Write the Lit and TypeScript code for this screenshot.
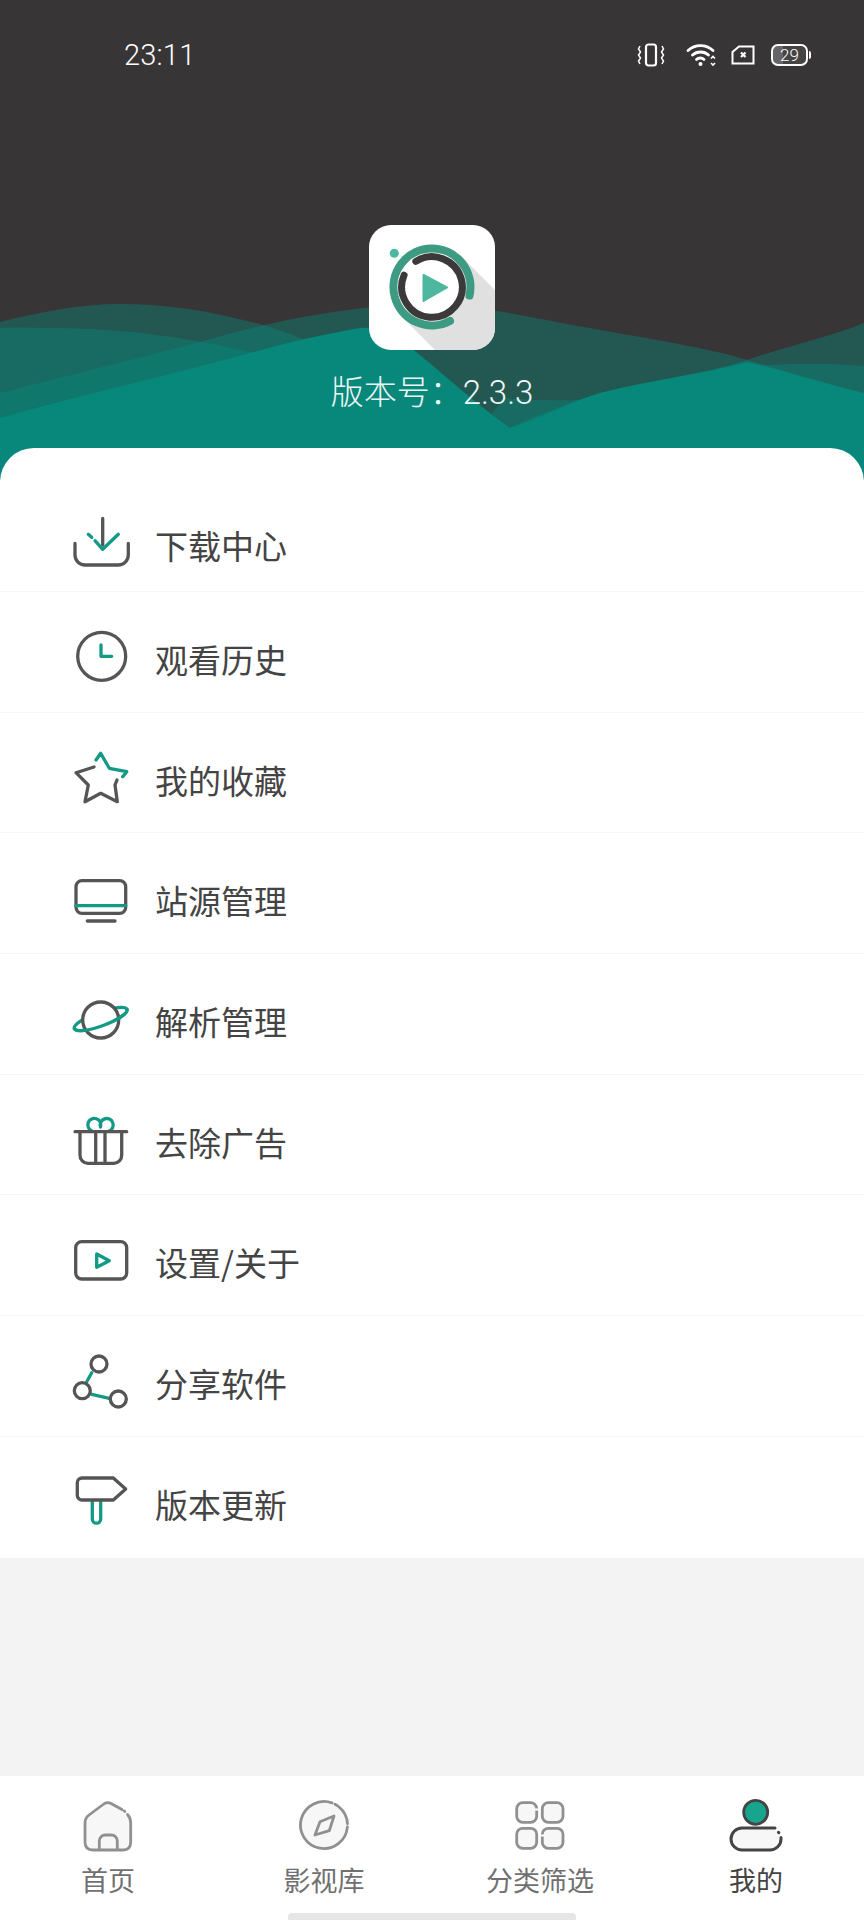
import { LitElement, html, css } from "lit";
import { customElement } from "lit/decorators.js";

const ic = (body: unknown) => html`<svg class="ic" viewBox="0 0 64 64" width="64" height="64">${body}</svg>`;

const rows = [
  { label: "下载中心", icon: html`<svg class="ic" viewBox="0 0 64 64"><path class="d" d="M6 30.5V42a10 10 0 0 0 10 10H49.3a10 10 0 0 0 10-10V30.5M33.7 5.3V32"/><path class="t" d="M19.3 21.3l3.4 3M26 27.7l7.7 8.6 15.6-15"/></svg>` },
  { label: "观看历史", icon: html`<svg class="ic" viewBox="0 0 64 64"><circle class="d" cx="32.7" cy="29.3" r="24"/><path class="t" d="M32 18V29.3H42.7"/></svg>` },
  { label: "我的收藏", icon: html`<svg class="ic" viewBox="0 0 64 64"><path class="t" d="M27 12l4.7-6.7 8.6 15 17.4 3.4-4 5"/><path class="d" d="M48 32l-2 5 2.3 16.7-16.6-8.4L16 53.7 19.3 37 7 24.7 25 19"/></svg>` },
  { label: "站源管理", icon: html`<svg class="ic" viewBox="0 0 64 64"><rect class="d" x="7" y="12.7" width="49.7" height="32.6" rx="6"/><path class="t" d="M7 37.7H56.7"/><path class="d" d="M18.3 53H46"/></svg>` },
  { label: "解析管理", icon: html`<svg class="ic" viewBox="0 0 64 64"><ellipse class="t" cx="31.7" cy="30" rx="28" ry="7" transform="rotate(-20 31.7 30)"/><circle class="d w" cx="31.7" cy="31" r="18"/><path class="t" d="M5.4 39.6A28 7 -20 0 0 58 20.4"/></svg>` },
  { label: "去除广告", icon: html`<svg class="ic" viewBox="0 0 64 64"><path class="t" d="M23 21a6.5 6.5 0 1 1 8.5-4 6.5 6.5 0 1 1 8.7 4"/><path class="d" d="M6 21.7H57.7M11 21.7V45a8 8 0 0 0 8 8.3H44.7a8 8 0 0 0 8-8.3V21.7M26.7 21.7V53M36 21.7V53"/></svg>` },
  { label: "设置/关于", icon: html`<svg class="ic" viewBox="0 0 64 64"><rect class="d" x="6.7" y="11.7" width="51" height="37.3" rx="6"/><path class="t" d="M27.7 24L40.3 30.7 27.7 37.3Z"/></svg>` },
  { label: "分享软件", icon: html`<svg class="ic" viewBox="0 0 64 64"><path class="t" d="M22.7 21.7l-5 9M22.7 43.3l17.6 4"/><circle class="d" cx="30" cy="13" r="8"/><circle class="d" cx="13.3" cy="39.7" r="8"/><circle class="d" cx="49.3" cy="48" r="8"/></svg>` },
  { label: "版本更新", icon: html`<svg class="ic" viewBox="0 0 64 64"><path class="t" d="M23.3 29V47a4.2 4.2 0 0 0 8.4 0V29"/><path class="d" d="M13 6H44.3L56.7 17 44.3 28H13a4.7 4.7 0 0 1-4.7-4.7V10.7A4.7 4.7 0 0 1 13 6Z"/></svg>` },
];

const tabs = [
  { label: "首页", active: false, icon: html`<svg class="nv" viewBox="0 0 56 56"><path class="f" d="M5 25Q5 20 9 17L24.500 5.500Q27.700 3.800 31 5.500L47 16.500Q50.700 20 50.700 25V44Q50.700 52 43 52H13Q5 52 5 44Z"/><path class="g" d="M42 11.500L31 5.500Q27.700 3.800 24.500 5.500L9 17Q5 20 5 25V44Q5 52 13 52H43Q50.700 52 50.700 44V25Q50.700 20 47.500 16.500M44.200 13l.6.5M19.300 52V43a6 6 0 0 1 6-6h6a6 6 0 0 1 6 6V52"/></svg>` },
  { label: "影视库", active: false, icon: html`<svg class="nv" viewBox="0 0 56 56"><circle class="f" cx="28" cy="27" r="23.500"/><path class="g" d="M51.400 29A23.500 23.500 0 1 1 36 4.900M39 6.300L41.500 7.700M43.100 9A23.500 23.500 0 0 1 51.500 25.800"/><path class="g" d="M38 18L33.300 32.700 19 37 24 23.700Z"/></svg>` },
  { label: "分类筛选", active: false, icon: html`<svg class="nv" viewBox="0 0 56 56"><rect class="f g" x="4.700" y="4.700" width="20" height="19.600" rx="6"/><rect class="f g" x="30.300" y="4.700" width="20.700" height="19.600" rx="6"/><rect class="f g" x="4.700" y="30.300" width="20" height="20" rx="6"/><rect class="f g" x="30.300" y="30.300" width="20.700" height="20" rx="6"/><path class="cut" d="M24.700 10.500V12.500M30.300 36.500V38.500"/></svg>` },
  { label: "我的", active: true, icon: html`<svg class="nv" viewBox="0 0 56 56"><circle class="me" cx="27.700" cy="14.300" r="12"/><rect class="f" x="2.700" y="29.700" width="50.600" height="22.300" rx="11"/><path class="h" d="M47 30H14a11 11 0 0 0 0 22H42a11 11 0 0 0 11-11V39.500M50.500 34.300l.3.3"/></svg>` },
];

@customElement("app-root")
export class AppRoot extends LitElement {
  static styles = css`
    :host {
      display: flex;
      flex-direction: column;
      width: 864px;
      height: 1920px;
      background: #f3f3f3;
      font-family: "Noto Sans CJK SC", Roboto, sans-serif;
      position: relative;
      overflow: hidden;
    }
    .hero {
      position: relative;
      height: 480px;
      flex: none;
      background: #383536;
      display: flex;
      flex-direction: column;
      align-items: center;
      color: #fff;
    }
    .waves { position: absolute; inset: 0; width: 864px; height: 480px; }
    .status {
      position: relative;
      align-self: stretch;
      height: 110px;
      padding: 0 56px 0 124px;
      display: flex;
      align-items: center;
      justify-content: space-between;
      font-family: Roboto, sans-serif;
    }
    .time { font-size: 29px; font-weight: 300; letter-spacing: 0.2px; }
    .sicons { display: flex; align-items: center; }
    .sicons svg { display: block; fill: none; stroke: #fff; }
    .vib { margin-right: 21px; }
    .wifi { margin-right: 15px; }
    .batx { margin-right: 16px; }
    .batt {
      box-sizing: border-box;
      width: 37px;
      height: 22px;
      border: 2px solid #fff;
      border-radius: 7px;
      background: linear-gradient(90deg, #666 0 30%, #444 30% 100%);
      font-size: 17px;
      font-weight: 300;
      line-height: 18px;
      text-align: center;
      position: relative;
    }
    .batt::after {
      content: "";
      position: absolute;
      right: -5px;
      top: 5px;
      width: 2px;
      height: 8px;
      background: #fff;
      border-radius: 0 2px 2px 0;
    }
    .logo {
      position: relative;
      display: block;
      width: 126px;
      height: 125px;
      margin-top: 115px;
    }
    .version {
      position: relative;
      margin-top: 23px;
      font-size: 33px;
      line-height: 40px;
      font-weight: 300;
      color: #eef7f5;
      font-family: Roboto, "Noto Sans CJK SC", sans-serif;
    }
    .card {
      position: relative;
      flex: none;
      margin-top: -32px;
      padding-top: 36px;
      background: #fff;
      border-radius: 34px 34px 0 0;
    }
    .row {
      box-sizing: border-box;
      height: 120.7px;
      padding: 14px 0 0 69px;
      display: flex;
      align-items: center;
      gap: 22px;
      border-bottom: 1px solid #f6f6f6;
      font-size: 33px;
      color: #444;
    }
    .row:first-child { height: 108px; }
    .row:last-child { border-bottom: none; }
    .ic { width: 64px; height: 64px; flex: none; display: block; }
    .d, .t { fill: none; stroke-width: 3.300; stroke-linecap: round; stroke-linejoin: round; }
    .d { stroke: #555; }
    .t { stroke: #129a85; }
    .w { fill: #fff; }
    .spacer { flex: 1; }
    .nav {
      flex: none;
      height: 144px;
      background: #fff;
      display: grid;
      grid-template-columns: repeat(4, 1fr);
    }
    .tab {
      display: flex;
      flex-direction: column;
      align-items: center;
      padding-top: 22px;
      font-size: 27px;
      line-height: 40px;
      color: #707070;
    }
    .tab.on { color: #444; }
    .nv { display: block; width: 56px; height: 56px; margin-bottom: 6px; }
    .f { fill: #f7f7f7; }
    .g { fill: none; stroke: #909090; stroke-width: 2.800; stroke-linecap: round; stroke-linejoin: round; }
    .f.g { fill: #f7f7f7; }
    .h { fill: none; stroke: #444; stroke-width: 3; stroke-linecap: round; }
    .me { fill: #17a58d; stroke: #444; stroke-width: 2.800; }
    .cut { fill: none; stroke: #fff; stroke-width: 4; }
    .indicator {
      position: absolute;
      left: 288px;
      bottom: 0;
      width: 288px;
      height: 7px;
      background: #e6e6e6;
      border-radius: 4px 4px 0 0;
    }
  `;

  render() {
    return html`
      <section class="hero">
        <svg class="waves" viewBox="0 0 864 480">
          <g fill="#07887a" fill-opacity="0.42">
            <path d="M0 322C40 312 80 304 120 304C170 304 215 312 263 325C330 345 400 385 460 410L551 447V480H0Z"/>
            <path d="M0 393C70 375 140 358 200 342C260 325 320 310 400 305C440 303 470 306 504 312C620 335 700 345 747 360C790 372 830 385 864 393V480H0Z"/>
            <path d="M0 328C20 327 40 328 60 328C130 329 190 338 250 352C320 368 370 385 430 410L520 450V480H0Z"/>
            <path d="M864 323C820 340 780 348 747 360C700 375 650 380 600 393C570 402 530 418 504 430L440 480H864Z"/>
            <path d="M864 366C820 362 780 364 747 366C700 372 650 385 600 398C570 402 530 400 504 398L440 480H864Z"/>
          </g>
          <path fill="#07887a" d="M0 418C80 395 170 375 250 353C290 342 320 335 360 328C400 325 430 370 510 428C540 418 570 402 600 393C650 380 700 375 747 362C790 372 830 385 864 393V480H0Z"/>
        </svg>
        <div class="status">
          <span class="time">23:11</span>
          <div class="sicons">
            <svg class="vib" width="28" height="24" viewBox="0 0 28 24"><rect x="9" y="1.500" width="10" height="21" rx="2.500" stroke-width="2.200"/><path stroke-width="1.500" d="M3 3l-1.500 3 2 3-2 3 2 3-2 3 1.500 3M25 3l1.500 3-2 3 2 3-2 3 2 3-1.500 3"/></svg>
            <svg class="wifi" width="30" height="24" viewBox="0 0 30 24"><path stroke-width="2.800" stroke-linecap="round" d="M2 7.500C9 1 20 1 27 7.500M6.500 12C11 8 18 8 22.500 12M10.500 16.500C12.500 14.500 16 14.500 18 16.500"/><circle cx="14.500" cy="21" r="2" fill="#fff" stroke="none"/><path stroke-width="1.600" d="M25 15.500l2-2 2 2M25 20l2 2 2-2"/></svg>
            <svg class="batx" width="24" height="20" viewBox="0 0 24 20"><path stroke-width="2" d="M8 1.500H22.500V18.500H1.500V7Z"/><path stroke-width="2.200" d="M10 7.500l4.500 4.500M14.500 7.500L10 12"/></svg>
            <div class="batt">29</div>
          </div>
        </div>
        <svg class="logo" viewBox="0 0 126 125">
          <defs><clipPath id="lc"><rect width="126" height="125" rx="22"/></clipPath></defs>
          <rect width="126" height="125" rx="22" fill="#fff"/>
          <path clip-path="url(#lc)" fill="#e0e0e0" d="M93 32L126 65V125H66L33 92Z"/>
          <circle cx="63" cy="62" r="30" fill="#fff"/>
          <path fill="none" stroke="#3d9a83" stroke-width="8" stroke-linecap="round" d="M81 96A38.500 38.500 0 1 1 100.500 70.500"/>
          <path fill="none" stroke="#3c393a" stroke-width="7" stroke-linecap="round" d="M46.800 36.400A30.300 30.300 0 1 1 35.100 50.200"/>
          <circle cx="25.300" cy="28.300" r="4.500" fill="#4db89f"/>
          <path fill="#4db89f" stroke="#4db89f" stroke-width="2" stroke-linejoin="round" d="M54.500 50L78 62.500 54.500 76Z"/>
        </svg>
        <div class="version">版本号：2.3.3</div>
      </section>
      <section class="card">
        ${rows.map((r) => html`<div class="row">${r.icon}<span>${r.label}</span></div>`)}
      </section>
      <div class="spacer"></div>
      <nav class="nav">
        ${tabs.map((t) => html`<div class="tab ${t.active ? "on" : ""}">${t.icon}<span>${t.label}</span></div>`)}
      </nav>
      <div class="indicator"></div>
    `;
  }
}
